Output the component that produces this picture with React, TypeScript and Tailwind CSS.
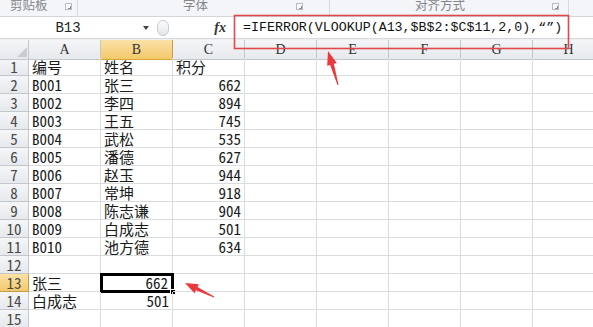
const rows: [string, string, string][] = [
  ["编号", "姓名", "积分"],
  ["B001", "张三", "662"],
  ["B002", "李四", "894"],
  ["B003", "王五", "745"],
  ["B004", "武松", "535"],
  ["B005", "潘德", "627"],
  ["B006", "赵玉", "944"],
  ["B007", "常坤", "918"],
  ["B008", "陈志谦", "904"],
  ["B009", "白成志", "501"],
  ["B010", "池方德", "634"],
  ["", "", ""],
  ["张三", "662", ""],
  ["白成志", "501", ""],
  ["", "", ""],
]

const cols = ["A", "B", "C", "D", "E", "F", "G", "H"]

const cellFont = "font-['Noto_Sans_Mono_CJK_SC','Noto_Sans_CJK_SC',monospace] text-[15px] text-[#1a1a1a]"

function Launcher() {
  return (
    <div className="size-[7px] border border-[#b7bcc2] bg-[#f7f8fa] relative">
      <div className="absolute right-0 bottom-0 size-[3px] border-r border-b border-[#8a9097]" />
    </div>
  )
}

function Ribbon() {
  return (
    <div className="h-[17px] flex bg-[#f3f5f8] border-b border-[#d3d7dc] text-[12.5px] leading-[12px] text-[#84878c] font-['Noto_Sans_CJK_SC',sans-serif] overflow-hidden">
      <div className="w-[78px] shrink-0 flex items-start justify-between pl-[10px] pr-[5px] border-r border-[#d6dadf]">
        <span className="-mt-[1px]">剪贴板</span>
        <div className="mt-[3px]"><Launcher /></div>
      </div>
      <div className="w-[252px] shrink-0 flex items-start justify-between pl-[105px] pr-[26px] border-r border-[#d6dadf]">
        <span className="-mt-[1px]">字体</span>
        <div className="mt-[3px]"><Launcher /></div>
      </div>
      <div className="w-[239px] shrink-0 flex items-start justify-between pl-[85px] pr-[9px] border-r border-[#d6dadf]">
        <span className="-mt-[1px]">对齐方式</span>
        <div className="mt-[3px]"><Launcher /></div>
      </div>
    </div>
  )
}

function FormulaBar() {
  return (
    <div className="h-[22px] flex items-center bg-white border-b border-[#d5d9de]">
      <div className="w-[136px] shrink-0 text-center font-['Liberation_Mono',monospace] text-[14px] text-[#222] pt-[1px]">B13</div>
      <div className="w-[19px] shrink-0 flex justify-center">
        <div className="w-0 h-0 border-l-[3px] border-r-[3px] border-t-[4px] border-l-transparent border-r-transparent border-t-[#444]" />
      </div>
      <div className="w-[12px] h-[16px] shrink-0 rounded-full border border-[#c8ccd1] bg-gradient-to-b from-[#fbfbfc] to-[#e4e7ea] ml-[2px]" />
      <div className="w-[61px] shrink-0 text-right pr-[4px] font-['Liberation_Serif',serif] italic font-bold text-[14px] text-[#333]">fx</div>
      <div className="flex-1 pl-[13px] pt-[1px] font-['Liberation_Mono',monospace] text-[13.3px] text-[#111] whitespace-nowrap">
        =IFERROR(VLOOKUP(A13,$B$2:$C$11,2,0),“”)
      </div>
    </div>
  )
}

function Grid() {
  return (
    <div className="grid grid-cols-[29px_repeat(8,72px)] auto-rows-[18px] w-[605px]">
      <div className="h-[20px] bg-gradient-to-b from-[#f5f6f8] to-[#e6e9ed] border-r border-b border-[#c3c7cc] relative">
        <svg className="absolute left-[17px] top-[7px]" width="10" height="10" viewBox="0 0 10 10">
          <polygon points="10,0 10,10 0,10" fill="#c9cdd2" />
        </svg>
      </div>
      {cols.map((c) => (
        <div
          key={c}
          className={`h-[20px] flex items-center justify-center border-r border-b font-['Liberation_Serif',serif] text-[14px] text-[#333] ${
            c === "B"
              ? "bg-gradient-to-b from-[#fbe1a6] to-[#f3c969] border-[#c59c4a] border-b-[#d9a534]"
              : "bg-gradient-to-b from-[#f5f6f8] to-[#e6e9ed] border-[#c3c7cc]"
          }`}
        >
          {c}
        </div>
      ))}
      {rows.map((r, i) => {
        const n = i + 1
        const active = n === 13
        return [
          <div
            key={`h${n}`}
            className={`flex items-end justify-center border-r border-b ${cellFont} text-[14px] leading-[17px] text-[#4a4a4a] ${
              active
                ? "bg-gradient-to-b from-[#fbe1a6] to-[#f3c969] border-[#c59c4a]"
                : "bg-gradient-to-b from-[#f5f6f8] to-[#e6e9ed] border-[#c3c7cc]"
            }`}
          >
            {n}
          </div>,
          ...cols.map((c, j) => {
            const v = j < 3 ? r[j] : ""
            const numeric = /^\d+$/.test(v)
            const isActive = active && c === "B"
            return (
              <div
                key={`${n}${c}`}
                className={`relative flex items-end border-r border-b border-[#dadcdd] leading-[17px] px-[3px] ${cellFont} ${
                  numeric ? "justify-end" : "justify-start"
                }`}
              >
                {isActive && (
                  <>
                    <div className="absolute -left-[1px] -top-[1px] w-[74px] h-[20px] border-[3px] border-black" />
                    <div className="absolute -right-[4px] -bottom-[4px] size-[6px] bg-black border border-white" />
                  </>
                )}
                <span className={`relative ${isActive ? "mr-[1px]" : ""}`}>{v}</span>
              </div>
            )
          }),
        ]
      })}
    </div>
  )
}

export default function App() {
  return (
    <div className="w-[593px] h-[327px] overflow-hidden relative bg-white">
      <Ribbon />
      <FormulaBar />
      <div className="h-[1px] bg-[#eef0f2]" />
      <Grid />
      <svg className="absolute inset-0 pointer-events-none" width="593" height="327" viewBox="0 0 593 327">
        <rect x="234.5" y="15.5" width="334" height="33" fill="none" stroke="#e2474b" strokeWidth="1.6" />
        <polygon
          points="328,51 336.8,63 333.9,63.8 338.5,84.9 337.5,85.1 330.1,65 327.2,65.8"
          fill="#ea3a3d"
        />
        <polygon
          points="185,283 198.9,284.15 197.5,287 214.2,296.55 213.8,297.45 195.9,290.3 194.5,293.15"
          fill="#ea3a3d"
        />
      </svg>
    </div>
  )
}
